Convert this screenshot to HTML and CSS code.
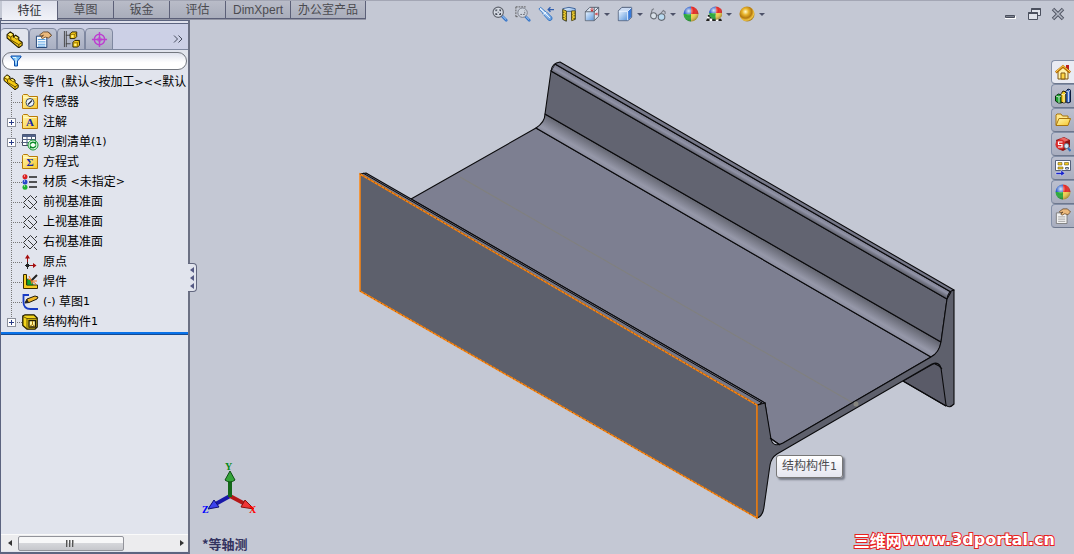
FILE: index.html
```html
<!DOCTYPE html>
<html lang="zh-CN">
<head>
<meta charset="utf-8">
<title>零件1</title>
<link rel="stylesheet" href="styles.css">
</head>
<body>
<svg class="defs" aria-hidden="true">
  <defs>
    <linearGradient id="gold" x1="0" y1="0" x2="1" y2="1"><stop offset="0" stop-color="#fff9b0"/><stop offset="1" stop-color="#f7c62c"/></linearGradient>
    <linearGradient id="sky" x1="0" y1="0" x2="1" y2="1"><stop offset="0" stop-color="#e4f1ff"/><stop offset="1" stop-color="#5f98dc"/></linearGradient>
    <radialGradient id="shine" cx=".35" cy=".3" r=".75"><stop offset="0" stop-color="#fff" stop-opacity=".85"/><stop offset=".45" stop-color="#fff" stop-opacity="0"/><stop offset="1" stop-color="#000" stop-opacity=".35"/></radialGradient>
    <radialGradient id="amber" cx=".4" cy=".35" r=".7"><stop offset="0" stop-color="#fffbd0"/><stop offset=".3" stop-color="#e9b52c"/><stop offset=".6" stop-color="#b47a10"/><stop offset=".8" stop-color="#f0c444"/><stop offset="1" stop-color="#8a6010"/></radialGradient>
    <symbol id="part" viewBox="0 0 16 16"><path d="M1 3.500 4 .8l3 2v2.700l2-1.500 3 2v2.500l3.200 2.200v2.800l-3.200 2.300L1 6.500z" fill="#f4c914" stroke="#1c1600"/><path d="m1 3.500 3.500 2.300 2.500-2M4.500 5.800v2.500l7.500 4.500 3-2M7 5.500l3.500 2.300 1.500-1.500M12 13v2" fill="none" stroke="#4c3900" stroke-width=".8"/><path d="m2 3.300 2-1.500 2 1.300-1.500 1.500zM8 5.800l1-.8 2 1.300-1 .7z" fill="#fff27c"/></symbol>
    <symbol id="planeicon" viewBox="0 0 16 16"><path d="m1.500 8.500 7-7 6.500 6.500-7 7zM1 2l3 3m8 8 3 3M6 6l5 5M1 14l2-2M13 4l2-2" fill="none" stroke="#222" stroke-width=".9"/></symbol>
    <symbol id="folder" viewBox="0 0 16 16"><path d="M.5 14.500V1.500l1-1h4l1.500 2h8.500v12z" fill="url(#gold)" stroke="#b97b08"/><path d="M1.500 3.500h13" stroke="#fff8c4"/></symbol>
    <symbol id="ball" viewBox="0 0 16 16"><path d="M8 8V.5A7.500 7.500 0 0 0 .5 8z" fill="#2459c8"/><path d="M8 8V.5A7.500 7.500 0 0 1 15.500 8z" fill="#e32a26"/><path d="M8 8H.5A7.500 7.500 0 0 0 8 15.500z" fill="#28a838"/><path d="M8 8h7.500A7.500 7.500 0 0 1 8 15.500z" fill="#f1cf4c"/><circle cx="8" cy="8" r="7.500" fill="url(#shine)"/></symbol>
    <symbol id="sheet" viewBox="0 0 18 18"><path d="M1.500 5.500h11v12h-11z" fill="#f8fcff" stroke="#1c3f72"/><path d="M3 9h8M3 11.500h8M3 14h8M3 16h8" stroke="#4b9ae0"/><path d="m5 4 4-3h5l3.500 3.500-3 3-3.500-1L8 8 6.500 7 9 4.500 6 5.500z" fill="#ebb97c" stroke="#5a3b1a" stroke-width=".8"/><path d="m14 1 3.500 3.500-2 2" fill="none" stroke="#3d2a16" stroke-dasharray="1 1"/></symbol>
  </defs>
</svg>
<div class="app">
  <header class="top">
    <nav class="tabs">
      <button class="tab active">特征</button><button class="tab">草图</button><button class="tab">钣金</button><button class="tab">评估</button><button class="tab">DimXpert</button><button class="tab">办公室产品</button>
    </nav>
    <div class="view-tools">
      <button class="tool" aria-label="整屏显示全图"><svg viewBox="0 0 18 18"><path d="m11 11 5 5" stroke="#3675c8" stroke-width="3" stroke-linecap="round"/><path d="m11 10.500 5 5" stroke="#c6e0ff"/><circle cx="7" cy="7" r="5.800" fill="#d5dae3" stroke="#60646e" stroke-width="1.300"/><path d="M4.500 6V4.500H6m2 0h1.500V6m0 2v1.500H8m-2 0H4.500V8M6.500 7h1" fill="none" stroke="#3f4552" stroke-width="1.300"/></svg></button>
      <button class="tool" aria-label="局部放大"><svg viewBox="0 0 18 18"><path d="M1 1h11M1 1v11M1 12h3" stroke="#555" stroke-dasharray="2 1" fill="none"/><path d="m12 12 4 4" stroke="#3675c8" stroke-width="3" stroke-linecap="round"/><path d="m12 11.500 4 4" stroke="#c6e0ff"/><circle cx="8.500" cy="7.500" r="5.300" fill="#cfd5df" stroke="#747984"/><path d="M6 9.500h5V5" fill="none" stroke="#60646e" stroke-dasharray="2 1"/></svg></button>
      <button class="tool" aria-label="上一视图"><svg viewBox="0 0 18 18"><path d="M18 4h-6.500m2.500-2.500L11.500 4 14 6.500" fill="none" stroke="#315fae" stroke-width="1.500"/><path d="M1 3.500 3 1.500l5 4.500 2 1 5.500 5.500q1.500 3-2 4-2 0-3-2L6 9.500 5 7.500z" fill="url(#sky)" stroke="#2d70c0"/><path d="m6 9.500 3.500-3M2.500 3l5 4.500 6 6" fill="none" stroke="#f4faff"/></svg></button>
      <button class="tool" aria-label="剖面视图"><svg viewBox="0 0 18 18"><path d="M2 3q7-3 14 0v12h-4V6H6v11l-4-2z" fill="url(#sky)" stroke="#34598f"/><path d="M2 4l4 1.500V17l-4-2zM12 5.500h4V15l-4 1.500z" fill="#f7d32f" stroke="#494214"/><path d="M2 7h2m-2 3h2m-2 3h2m1-4.500h1m-1 3h1m-1 3h1M14 8h2m-2 3h2m-2 3h2m-4-4.500h1m-1 3h1" stroke="#574c10"/></svg></button>
      <button class="tool drop" aria-label="视图定向"><svg viewBox="0 0 18 18"><path d="M1.500 6.500 6.500 1.500h10v10l-5 5h-10z" fill="#dce4ef" stroke="#4f5968"/><path d="M2 7h9v9H2z" fill="url(#sky)"/><path d="M1.500 6.500h10v10m0-10 5-5m-5 0v5" fill="none" stroke="#4f5968"/><path d="M9 2v4m-1.500-2L9 6l1.500-2M16 9h-3m1.500-1.500L13 9l1.500 1.500" fill="none" stroke="#cf2323"/></svg></button>
      <button class="tool drop" aria-label="显示样式"><svg viewBox="0 0 18 18"><path d="m1.500 5.500 4-4h11v11l-4 4h-11z" fill="#cbdbf3" stroke="#44526e"/><path d="m12 5.500 4-4v11l-4 4z" fill="#397ad7"/><path d="M2 6h10v10H2z" fill="url(#sky)"/><path d="M12 6v10m-10-10h10l4-4" fill="none" stroke="#ebf4ff"/></svg></button>
      <button class="tool drop" aria-label="隐藏/显示项目"><svg viewBox="0 0 18 18"><path d="M1 9.500 2.500 4l2-1M10 11l5-6 2 1.500V9M7 10.500h3" fill="none" stroke="#777b84" stroke-width="1.200"/><ellipse cx="4" cy="11" rx="3.300" ry="3.500" fill="#d9e1e9" stroke="#656a72" stroke-width="1.200"/><ellipse cx="13" cy="12.500" rx="3.700" ry="3.700" fill="#b9daf0" stroke="#656a72" stroke-width="1.200"/></svg></button>
      <button class="tool" aria-label="编辑外观"><svg><use href="#ball"/></svg></button>
      <button class="tool drop" aria-label="应用布景"><svg viewBox="0 0 18 18"><path d="M2 10h14l2 7H0z" fill="#fff"/><path d="M2 10h3v2H2zm11 0h3v2h-3zM4 12h3v2H4zm7 0h3v2h-3zM1 14h3v3H0zm6 0h4v3H7zm7 0h3l1 3h-4z" fill="#222"/><svg x="3" width="13" height="13"><use href="#ball"/></svg></svg></button>
      <button class="tool drop" aria-label="视图设定"><svg viewBox="0 0 18 18"><circle cx="9" cy="9" r="8.500" fill="url(#amber)"/></svg></button>
    </div>
    <div class="window-tools">
      <button aria-label="最小化"><svg viewBox="0 0 14 14"><path d="M2 9h11v3H2z" fill="#fff"/><path d="M2.500 8.500h9v2h-9z" fill="#7d828f" stroke="#4b505e"/></svg></button>
      <button aria-label="还原"><svg viewBox="0 0 14 14"><path d="M4.500 1.500h9v7h-9z" fill="#dfe2ea" stroke="#4b505e"/><path d="M4.500 2h9" stroke="#4b505e" stroke-width="2"/><path d="M1.500 5.500h9v7h-9z" fill="#dfe2ea" stroke="#4b505e"/><path d="M1.500 6h9" stroke="#4b505e" stroke-width="2"/></svg></button>
      <button aria-label="关闭"><svg viewBox="0 0 14 14"><path d="m2 2 10 10m0-10-10 10" stroke="#505563" stroke-width="3.500"/><path d="m2.500 2.500 9 9m0-9-9 9" stroke="#b3b8c4" stroke-width="1.500"/></svg></button>
    </div>
  </header>
  <div class="body">
    <aside class="panel">
      <div class="panel-tabs">
        <button class="ptab on" aria-label="设计树"><svg><use href="#part"/></svg></button>
        <button class="ptab" aria-label="属性"><svg><use href="#sheet"/></svg></button>
        <button class="ptab" aria-label="配置"><svg viewBox="0 0 18 18"><path d="M1.500 0v17M3.500 0v17M3 4.500h5M3 13.500h5" stroke="#444"/><path d="m7.500 3 2-2h5v5l-2 2h-5zM10.500 12l2-2h5v5l-2 2h-5z" fill="#f8ce19" stroke="#2b2100"/><path d="M8 3.500h4.500V8m0-4.500 2-2M11 12.500h4.500V17m0-4.500 2-2" fill="none" stroke="#7d5b00" stroke-width=".8"/><path d="M9 4.500h2v2H9zm3 9h2v2h-2z" fill="#fff39a"/></svg></button>
        <button class="ptab" aria-label="尺寸专家"><svg viewBox="0 0 18 18"><circle cx="9" cy="9" r="5.500" fill="none" stroke="#bd3fd0" stroke-width="1.500"/><circle cx="9" cy="9" r="2" fill="none" stroke="#bd3fd0"/><path d="M9 1v16M1 9h16" stroke="#bd3fd0" stroke-width="1.500"/></svg></button>
        <button class="more" aria-label="更多"><svg viewBox="0 0 10 8"><path d="m1 .5 3.500 3.500L1 7.500M5.500.5 9 4 5.500 7.500" fill="none" stroke="#444a5c"/></svg></button>
      </div>
      <label class="filter"><svg viewBox="0 0 12 12"><path d="M1 1h10v1L7.500 6v5h-3V6L1 2z" fill="#72bdf5" stroke="#0a4aa8"/><path d="M3 2.500h3v6" fill="none" stroke="#e5f7ff"/></svg><input type="text" aria-label="过滤"></label>
      <div class="tree-box">
        <div class="root"><svg class="ico"><use href="#part"/></svg><span>零件<b>1&nbsp; (</b>默认<b>&lt;</b>按加工<b>&gt;&lt;&lt;</b>默认</span></div>
        <ul class="tree">
          <li><span class="twig"></span><svg class="ico" viewBox="0 0 16 16"><use href="#folder"/><circle cx="8" cy="8.500" r="4" fill="#eaf5ff" stroke="#3b4a64"/><path d="m6 10.500 4-4" stroke="#223" stroke-width="1.300"/></svg>传感器</li>
          <li><span class="twig"><button class="plus" aria-label="展开"></button></span><svg class="ico" viewBox="0 0 16 16"><use href="#folder"/><text x="8" y="12" class="glyph">A</text></svg>注解</li>
          <li><span class="twig"><button class="plus" aria-label="展开"></button></span><svg class="ico" viewBox="0 0 16 16"><path d="M.5.500h13v11H.5z" fill="#fff" stroke="#434b60"/><path d="M.5.500h13v2.500H.5z" fill="#53648a"/><path d="M0 5.500h14M0 8.500h14M5 1v10M9.500 1v10" stroke="#526080"/><circle cx="11" cy="11" r="5" fill="#f2fff2" stroke="#14982f"/><path d="M8 10.500c1-2.500 4-3 5.500-1V7.500m.5 4c-1 2.500-4 3-5.500 1v2" fill="none" stroke="#0a8b28" stroke-width="1.400"/></svg>切割清单<b>(1)</b></li>
          <li><span class="twig"></span><svg class="ico" viewBox="0 0 16 16"><use href="#folder"/><text x="8" y="12" class="glyph">Σ</text></svg>方程式</li>
          <li><span class="twig"></span><svg class="ico" viewBox="0 0 16 16"><circle cx="3" cy="2.800" r="2.500" fill="#dc2020"/><circle cx="3" cy="8" r="2.500" fill="#2946ca"/><circle cx="3" cy="13.200" r="2.500" fill="#1fb331"/><path d="M2 2h1M2 7h1M2 12h1" stroke="#fff"/><path d="M7 3h8M7 8h8M7 13h8" stroke="#222" stroke-width="1.600"/></svg>材质<b>&nbsp;&lt;</b>未指定<b>&gt;</b></li>
          <li><span class="twig"></span><svg class="ico"><use href="#planeicon"/></svg>前视基准面</li>
          <li><span class="twig"></span><svg class="ico"><use href="#planeicon"/></svg>上视基准面</li>
          <li><span class="twig"></span><svg class="ico"><use href="#planeicon"/></svg>右视基准面</li>
          <li><span class="twig"></span><svg class="ico" viewBox="0 0 16 16"><path d="M5.500 2v9.500H13" fill="none" stroke="#9a1111"/><path d="m3 4.500 2.500-4 2.500 4zM11 9l3.500 2.500L11 14z" fill="#a60d0d"/><path d="M5.500 8v7M3 11.500h5" fill="none" stroke="#222"/><path d="M4 10h3v3H4z" fill="#222"/></svg>原点</li>
          <li><span class="twig"></span><svg class="ico" viewBox="0 0 16 16"><path d="M1.500.500h3V11h11v3.500h-14z" fill="#f5cb1f" stroke="#392d00"/><path d="M5 11V5c3 0 5.500 2 6 6z" fill="#13a32c" stroke="#115c1c" stroke-width=".6"/><path d="m9 7 6-6" stroke="#222" stroke-width="2"/><path d="m7 2 2 4m0 0L6 5m4 2h5m-5 0 4 3m-5-4 1 4" fill="none" stroke="#f47b20"/></svg>焊件</li>
          <li><span class="twig"></span><svg class="ico" viewBox="0 0 16 16"><path d="M7 1H1.500v7c0 5 3 7 7 7H16" fill="none" stroke="#183bc4" stroke-width="1.800"/><path d="m3 9 2-4 8-3 3 1-1 2-8 3.500z" fill="#f1b927" stroke="#231b0a"/><path d="m3 9 2-4 2 3.500z" fill="#222"/></svg><b>(-)&nbsp;</b>草图<b>1</b></li>
          <li><span class="twig"><button class="plus" aria-label="展开"></button></span><svg class="ico" viewBox="0 0 16 16"><path d="M.8 2 3 .8h9L15.200 4v9L13 15.200H5L.8 11.500z" fill="#f3d51c" stroke="#1e1900" stroke-width="1.300"/><path d="m1 2.500 4 2h10M5 4.500V15" fill="none" stroke="#4c3e00" stroke-width=".8"/><path d="M7 6.500h6.500v6.500H7z" fill="#fff6a0" stroke="#1e1900" stroke-width="1.300"/><path d="M10.500 7v3.500l-3 2m3-2 2.500 2" fill="none" stroke="#a57600"/></svg>结构构件<b>1</b></li>
        </ul>
        <hr class="rollback">
      </div>
      <div class="scroll"><button class="arrow left" aria-label="向左"></button><div class="track"><div class="thumb"></div></div><button class="arrow right" aria-label="向右"></button></div>
    </aside>
    <main class="canvas">
      <button class="handle" aria-label="折叠"><i></i><i></i><i></i></button>
      <svg class="model" viewBox="350 50 620 480">
        <defs>
          <linearGradient id="fillet" gradientUnits="userSpaceOnUse" x1="700" y1="203" x2="689" y2="222"><stop offset="0" stop-color="#62646f"/><stop offset=".6" stop-color="#9698a9"/><stop offset="1" stop-color="#7d7f91"/></linearGradient>
          <linearGradient id="lip" gradientUnits="userSpaceOnUse" x1="700" y1="147" x2="696" y2="154"><stop offset="0" stop-color="#757789"/><stop offset=".55" stop-color="#9193a6"/><stop offset="1" stop-color="#656773"/></linearGradient>
        </defs>
        <g stroke="#0a0a0c" stroke-width="1.100" stroke-linejoin="round">
          <path d="m903 381 43 25 3-5-7-33q-2-6-9-4z" fill="#5a5b68"/>
          <path d="M536 128 411 199l354 204 5 35 10 7 151-88z" fill="#7d7f91"/>
          <path d="M545 114q0 8-9 14l395 229q9-5 10-15z" fill="url(#fillet)"/>
          <path d="m551 71-6 43 396 228 6-43z" fill="#626471"/>
          <path d="m555 64-4 7 396 228 4-7z" fill="url(#lip)"/>
          <path d="M551 71q1-8 9-9l394 228-3 2-396-228" fill="#747687"/>
          <path d="m460 177 393 226" stroke="#80807f"/>
          <path d="M757 405q4-4 8-2l6 36q2 9 12 4l148-86q8-4 10-15l6-43q1-8 7-9v114q-5 5-8 1l-5-37q-2-7-9-4l-155 90q-6 4-7 11l-6 42q-1 9-7 11z" fill="#5e606c"/>
          <path d="m360 174 6-1 399 230-8 2z" fill="#777989"/>
          <path d="m363 173 399 230" stroke-width="1"/>
          <path d="m770 438 10 7M903 381l43 25m-11-42q4 1 7 5M947 299l4-7M757 405q3 0 5-3" fill="none"/>
        </g>
        <circle cx="856" cy="404" r="2.500" fill="#85857f"/>
        <path d="m360 174 397 231v113L360 291z" fill="#5d606c" stroke="#ff850c" stroke-width="1.500"/>
        <path d="m360 174 397 231M757 518 360 291" fill="none" stroke="#332719" stroke-width=".6" stroke-dasharray="1 3"/>
      </svg>
      <div class="tip">结构构件<b>1</b></div>
      <nav class="taskpane">
        <button class="first" aria-label="资源"><svg viewBox="0 0 16 16"><path d="M11 1h3v6h-3z" fill="#bb2020"/><path d="M3 7v8h10V7L8 3z" fill="#fff2ad" stroke="#7e5712"/><path d="m.8 8.500 7.200-6 7.200 6" fill="none" stroke="#b86e05" stroke-width="2.500"/><path d="m1 7.800 7-6 7 6" fill="none" stroke="#ffd353"/><path d="M6 9h4v6H6z" fill="#ffd644" stroke="#7e5712"/></svg></button>
        <button aria-label="设计库"><svg viewBox="0 0 16 16"><path d="m.5 8 3-2 3 1v8h-3l-3-2z" fill="#20a333" stroke="#092a0d"/><path d="m6 6 2-3 3 1v10l-2 1-3-1z" fill="#f0cb20" stroke="#251e00"/><path d="m11 3 2-2 2.500 1v12L13 15l-2-1z" fill="#3c6bc1" stroke="#0d1c3d"/><path d="m1 8 3 1 2-1M4 9v6m2-9 3 1 2-2M9 7v8m2-12 2.500 1L15 2M13.500 4v10" fill="none" stroke="#fff" stroke-width=".7"/></svg></button>
        <button aria-label="文件探索器"><svg viewBox="0 0 16 16"><path d="M1 13V3l1-1h4l1.500 2H13v3" fill="#ffe78a" stroke="#a8740c"/><path d="m1 13.500 3-7h11.500l-2.500 7z" fill="url(#gold)" stroke="#a8740c"/></svg></button>
        <button aria-label="搜索"><svg viewBox="0 0 16 16"><path d="m1 4 8-3 6 3v7l-7 4-5-2z" fill="#8e1414"/><path d="m4 3 5-1.500L14 4l-5 2z" fill="#ea6a66"/><circle cx="5.500" cy="8.500" r="5" fill="#d82a2a"/><path d="M7.500 6h-4v2.500h3.500V11h-4" fill="none" stroke="#fff" stroke-width="1.200"/><circle cx="11.500" cy="10" r="2.500" fill="#d0e6fa" stroke="#67737e"/><path d="m13 12 2.500 3" stroke="#3572ba" stroke-width="2"/></svg></button>
        <button aria-label="视图调色板"><svg viewBox="0 0 16 16"><path d="M.500.500h15v10H.5z" fill="#fff" stroke="#57627b"/><path d="M3 2.500h4v2.500H3zm6.500 0h4V5h-4zM3 7h5v2H3z" fill="#f4c618" stroke="#665c28" stroke-width=".6"/><path d="M10.500 7.500h3v1.500h-3z" fill="none" stroke="#57627b"/><path d="M1 12.500h5V10l4 3.500L6 16v-1.500H1z" fill="#1724cc" stroke="#fff" stroke-width=".4"/></svg></button>
        <button aria-label="外观"><svg><use href="#ball"/></svg></button>
        <button aria-label="自定义属性"><svg viewBox="0 0 18 18"><path d="M1.500 5.500h12v12h-12z" fill="#f2f2f2" stroke="#777"/><path d="M3.500 10h8M3.500 12.500h8M3.500 15h8" stroke="#999"/><path d="m5 4 4-3h5l3.500 3.500-3 3-3.500-1L8 8 6.500 7 9 4.500 6 5.500z" fill="#ebb97c" stroke="#5a3b1a" stroke-width=".8"/></svg></button>
      </nav>
      <div class="orient">
        <svg viewBox="0 0 60 56">
          <path d="M28 34 10 44" stroke="#1818a8" stroke-width="4"/><path d="m28 34 17 9" stroke="#b51818" stroke-width="4"/><path d="M28 35V16" stroke="#14681a" stroke-width="4"/>
          <path d="m23 18 5-9 5 9q-5 4-10 0z" fill="#35a43a" stroke="#0d5012"/><path d="m39 45 4-7 9 9z" fill="#ef3535" stroke="#861010"/><path d="m12 38 5 7-11 2z" fill="#3c43ed" stroke="#101077"/>
          <text x="23" y="8" fill="#078a17">Y</text><text x="47" y="51" fill="#f00">X</text><text x="0" y="51" fill="#00f">Z</text>
        </svg>
        <span>*等轴测</span>
      </div>
      <div class="mark"><span>三维网</span>www.3dportal.cn</div>
    </main>
  </div>
</div>
</body>
</html>
```
FILE: styles.css
```css
* { box-sizing: border-box; }
body {
  margin: 0;
  background: #c4c8d4;
  font: 12px/20px "DejaVu Sans", "Noto Sans CJK SC", sans-serif;
  color: #000;
}
button { margin: 0; padding: 0; border: 0; background: none; font: inherit; color: inherit; }
b { font-size: 11px; font-weight: normal; }
svg { display: block; }
.defs { position: absolute; width: 0; height: 0; }
.app { display: flex; flex-direction: column; min-height: 100vh; }

.top { display: flex; align-items: flex-start; height: 20px; border-top: 1px solid #a3a6b4; }
.tabs { display: flex; height: 18px; padding-left: 2px; border-bottom: 1px solid #5c6078; box-shadow: 0 1px #9295a4; }
.tab {
  min-width: 56px;
  padding: 0 7px;
  height: 18px;
  border-right: 1px solid #5c6078;
  border-bottom: 1px solid #5c6078;
  background: linear-gradient(#b9bcc8, #a9adbb);
  color: #4b4b50;
  font: 12px/18px "Liberation Sans", "Noto Sans CJK SC", sans-serif;
}
.tab.active { height: 20px; background: linear-gradient(#dfe1ec, #f1f2f8); color: #303036; }
.view-tools { display: flex; padding: 5px 0 0 126px; }
.tool { display: flex; align-items: center; margin-right: 7px; }
.tool svg { width: 16px; height: 16px; }
.tool.drop::after { content: ""; margin-left: 4px; border: 3px solid transparent; border-top: 3px solid #4d5269; border-bottom: 0; }
.window-tools { display: flex; gap: 10px; margin-left: auto; padding: 6px 9px 0 0; }
.window-tools svg { width: 14px; height: 14px; }

.body { display: grid; grid-template-columns: 190px 1fr; flex: 1; }
.panel { display: flex; flex-direction: column; min-width: 0; padding-bottom: 1px; border: solid #5c6480; border-width: 1px 1px 2px; border-right: 2px solid #6b7083; background: #e1e4ed; }
.panel-tabs { display: flex; align-items: flex-end; height: 29px; border-top: 2px solid #dfe1ec; box-shadow: inset 0 1px #5c6480, inset 0 -1px #7f88a0; background: #ccd0e6; }
.ptab { display: grid; place-items: center; width: 28px; height: 22px; border: 1px solid #7f88a0; border-radius: 4px 4px 0 0; background: linear-gradient(#bfc4d3, #a9afc2); }
.ptab svg { width: 17px; height: 17px; }
.ptab.on { background: #e1e4ed; border-left: 0; border-bottom-color: #e1e4ed; }
.more { margin: 0 5px 7px auto; }
.more svg { width: 10px; height: 8px; }
.filter { display: flex; align-items: center; gap: 4px; height: 18px; margin: 2px 1px 0; padding: 0 7px; border: 1px solid #73777f; border-radius: 9px; background: linear-gradient(#dfe2ed, #fff 60%); }
.filter svg { width: 12px; height: 12px; flex: none; }
.filter input { flex: 1; min-width: 0; height: 14px; padding: 0; border: 0; outline: 0; background: transparent; }

.tree-box { flex: 1; overflow: hidden; padding-top: 2px; white-space: nowrap; }
.root { display: flex; align-items: center; gap: 4px; height: 20px; padding-left: 2px; }
.ico { width: 16px; height: 16px; flex: none; overflow: visible; }
.glyph { font: bold 11px "Liberation Serif", serif; fill: #1427a8; text-anchor: middle; }
.tree { margin: 0; padding: 0 0 0 6px; list-style: none; }
.tree li { display: flex; align-items: center; height: 20px; }
.tree li .ico { margin-right: 5px; }
.twig {
  display: flex;
  align-items: center;
  width: 15px;
  height: 20px;
  background:
    repeating-linear-gradient(#777 0 1px, transparent 1px 2px) 4px 0 / 1px 100% no-repeat,
    repeating-linear-gradient(to right, #777 0 1px, transparent 1px 2px) 4px 10px / 11px 1px no-repeat;
}
.tree li:last-child .twig { background-size: 1px 10px, 11px 1px; }
.plus {
  width: 9px;
  height: 9px;
  border: 1px solid #8c909b;
  background:
    linear-gradient(#2a3c87, #2a3c87) center / 5px 1px no-repeat,
    linear-gradient(#2a3c87, #2a3c87) center / 1px 5px no-repeat,
    #fff;
}
.rollback { height: 3px; margin: 0; border: 0; background: #0a72e8; border-bottom: 1px solid #174b91; }
.scroll { display: flex; align-items: center; height: 17px; background: #ececee; border-top: 1px solid #fafafa; }
.arrow { width: 17px; height: 16px; display: grid; place-items: center; }
.arrow::before { content: ""; border: 3px solid transparent; }
.arrow.left::before { border-right: 4px solid #333; border-left: 0; }
.arrow.right::before { border-left: 4px solid #333; border-right: 0; }
.arrow.right { width: 12px; }
.track { flex: 1; }
.thumb { width: 67%; height: 15px; border: 1px solid #92939a; border-radius: 2px; background: repeating-linear-gradient(to right, #555 0 1px, #aaa 1px 2px, transparent 2px 3px) center / 9px 7px no-repeat, linear-gradient(#f7f7f8 45%, #d5d6da 50%, #c6c7cc); }

.canvas { position: relative; min-width: 0; }
.handle { position: absolute; left: -2px; top: 243px; display: grid; place-content: center; gap: 2px; width: 9px; height: 29px; border: 1px solid #62677f; border-left: 0; border-radius: 0 4px 4px 0; background: #e1e4ed; }
.handle i { border: 3px solid transparent; border-right: 4px solid #555a84; border-left: 0; }
.model { position: absolute; left: 160px; top: 30px; width: 620px; height: 480px; }
.tip { position: absolute; left: 586px; top: 435px; padding: 0 5px; border: 1px solid #777; border-radius: 3px; background: linear-gradient(#fff, #e5e6f0); box-shadow: 2px 2px 2px #777b87; color: #4c4c50; }
.taskpane { position: absolute; right: 0; top: 40px; width: 23px; }
.taskpane button { display: grid; place-items: center; width: 23px; height: 24px; border: 1px solid #8490a8; border-bottom-color: #6d778d; border-right: 0; border-radius: 4px 0 0 4px; background: linear-gradient(#bcc0cf, #a9aebf); }
.taskpane .first { background: #e9ebf3; }
.taskpane svg { width: 16px; height: 16px; }
.orient { position: absolute; left: 12px; bottom: 0; display: grid; gap: 16px; }
.orient svg { width: 60px; height: 56px; overflow: visible; }
.orient text { font: bold 10px "Liberation Serif", serif; }
.orient span { font: bold 13px/20px "Noto Sans CJK SC", sans-serif; color: #33335f; }
.mark { position: absolute; right: 19px; bottom: 4px; display: flex; align-items: center; color: #fff; font: bold 16px/20px "DejaVu Sans", sans-serif; -webkit-text-stroke: 2px #e8201e; paint-order: stroke fill; }
.mark span { font: bold 16px/20px "Noto Sans CJK SC", sans-serif; }
```
